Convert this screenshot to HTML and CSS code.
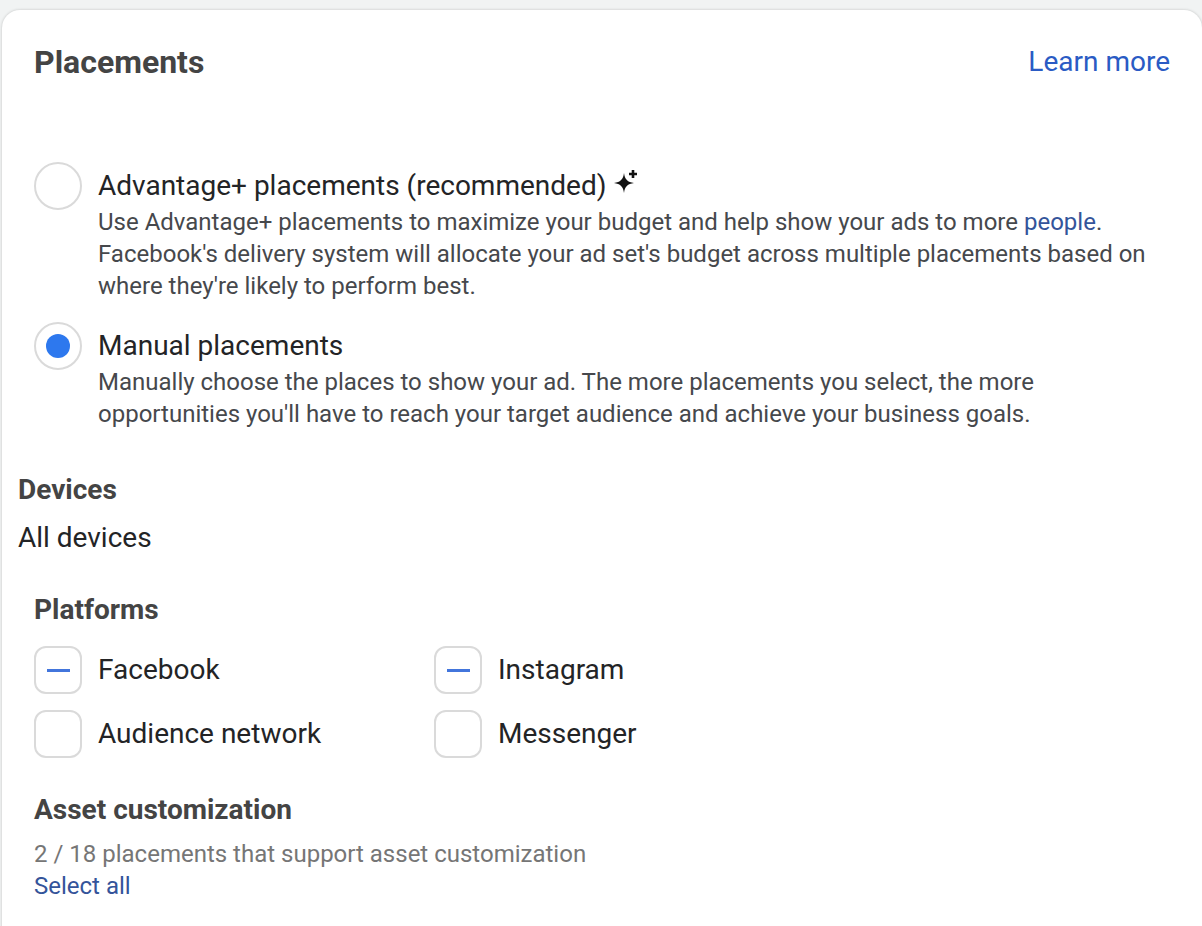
FILE: index.html
```html
<!DOCTYPE html>
<html lang="en">
<head>
    <meta charset="UTF-8">
    <title>Placements</title>
    <link rel="stylesheet" href="styles.css">
</head>
<body>

    <div class="card">
        <div class="card-header">
            <h2 class="card-title">Placements</h2>
            <a class="learn-more">Learn more</a>
        </div>

        <div class="radio-row first">
            <span class="radio"></span>
            <div class="radio-text">
                <div class="radio-label">Advantage+ placements (recommended)
                    <svg class="sparkle" viewBox="0 0 24 24" width="24" height="24">
                        <path d="M10 3 C10.800 9.400 13.600 12.200 20 13 C13.600 13.800 10.800 16.600 10 23 C9.200 16.600 6.400 13.800 0 13 C6.400 12.200 9.200 9.400 10 3 Z" fill="#111"/>
                        <path d="M17.700 0h2.600v2.700h2.700v2.600h-2.700v2.700h-2.600V5.300h-2.700V2.700h2.700z" fill="#111"/>
                    </svg>
                </div>
                <div class="radio-desc">Use Advantage+ placements to maximize your budget and help show your ads to more <a class="link">people</a>. Facebook's delivery system will allocate your ad set's budget across multiple placements based on where they're likely to perform best.</div>
            </div>
        </div>

        <div class="radio-row">
            <span class="radio checked"></span>
            <div class="radio-text">
                <div class="radio-label">Manual placements</div>
                <div class="radio-desc">Manually choose the places to show your ad. The more placements you select, the more opportunities you'll have to reach your target audience and achieve your business goals.</div>
            </div>
        </div>

        <div class="devices">
            <div class="section-title">Devices</div>
            <div class="devices-value">All devices</div>
        </div>

        <div class="section-title platforms-title">Platforms</div>
        <div class="platforms">
            <label class="check-row"><span class="checkbox mixed"></span>Facebook</label>
            <label class="check-row"><span class="checkbox mixed"></span>Instagram</label>
            <label class="check-row"><span class="checkbox"></span>Audience network</label>
            <label class="check-row"><span class="checkbox"></span>Messenger</label>
        </div>

        <div class="section-title asset-title">Asset customization</div>
        <div class="asset-count">2 / 18 placements that support asset customization</div>
        <a class="link select-all">Select all</a>
    </div>

</body>
</html>
```

FILE: styles.css
```css
/* General */
html, body {
    height: 100%;
}

body {
    margin: 0;
    padding: 10px 0 0 2px;
    box-sizing: border-box;
    overflow: hidden;
    background: #f1f3f3;
    font-family: 'Roboto', sans-serif;
    color: #232426;
}

.card {
    height: 960px;
    box-sizing: border-box;
    padding: 32px 32px 0 32px;
    background: #fff;
    border-radius: 18px;
    box-shadow: 0 0 3px rgba(0, 0, 0, 0.2);
}

/* Header */
.card-header {
    display: flex;
    justify-content: space-between;
    align-items: center;
    height: 40px;
}

.card-title {
    margin: 0;
    font-size: 32px;
    line-height: 40px;
    font-weight: 700;
    color: #444;
}

.learn-more {
    font-size: 28px;
    line-height: 40px;
    color: #2a5bc4;
}

/* Radios */
.radio-row {
    display: flex;
    gap: 16px;
    margin-top: 20px;
}

.radio-row.first {
    margin-top: 80px;
}

.radio {
    flex: none;
    display: flex;
    justify-content: center;
    align-items: center;
    width: 48px;
    height: 48px;
    box-sizing: border-box;
    border: 2px solid #dadada;
    border-radius: 50%;
}

.radio.checked::after {
    content: "";
    width: 24px;
    height: 24px;
    border-radius: 50%;
    background: #2d78ee;
}

.radio-label {
    display: flex;
    align-items: center;
    gap: 8px;
    padding-top: 4px;
    height: 40px;
    font-size: 28px;
    line-height: 40px;
}

.sparkle {
    margin-top: -8px;
}

.radio-desc {
    font-size: 24px;
    line-height: 32px;
    color: #46484c;
}

.link {
    color: #34549a;
}

/* Sections */
.section-title {
    font-size: 28px;
    line-height: 40px;
    font-weight: 700;
    color: #444;
}

.devices {
    margin: 40px 0 0 -16px;
}

.devices-value {
    margin-top: 8px;
    font-size: 28px;
    line-height: 40px;
}

.platforms-title {
    margin-top: 32px;
}

/* Platforms */
.platforms {
    display: grid;
    grid-template-columns: 400px 400px;
    row-gap: 16px;
    margin-top: 16px;
}

.check-row {
    display: flex;
    align-items: center;
    gap: 16px;
    font-size: 28px;
    line-height: 48px;
}

.checkbox {
    flex: none;
    display: flex;
    justify-content: center;
    align-items: center;
    width: 48px;
    height: 48px;
    box-sizing: border-box;
    border: 2px solid #dadada;
    border-radius: 12px;
}

.checkbox.mixed::after {
    content: "";
    width: 23px;
    height: 3px;
    background: #4275dc;
}

/* Asset customization */
.asset-title {
    margin-top: 32px;
}

.asset-count {
    margin-top: 8px;
    font-size: 24px;
    line-height: 32px;
    color: #767676;
}

.select-all {
    display: block;
    font-size: 24px;
    line-height: 32px;
}
```
